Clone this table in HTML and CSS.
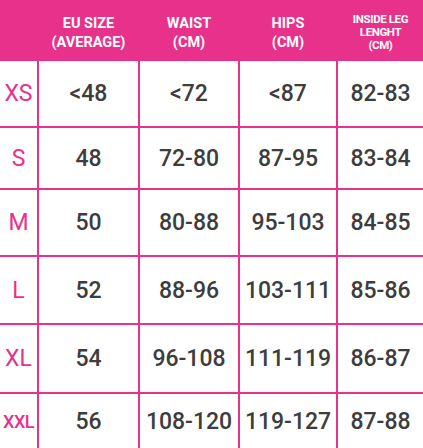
FILE: index.html
```html
<!DOCTYPE html>
<html lang="en">
<head>
<meta charset="utf-8">
<title>Size chart</title>
<link rel="stylesheet" href="styles.css">
</head>
<body>
<div class="chart">
  <div class="head">
    <div class="hcell"></div>
    <div class="hcell">EU SIZE<br>(AVERAGE)</div>
    <div class="hcell">WAIST<br>(CM)</div>
    <div class="hcell">HIPS<br>(CM)</div>
    <div class="hcell small">INSIDE LEG<br>LENGHT<br>(CM)</div>
  </div>
  <div class="grid">
    <div class="size">XS</div><div class="val">&lt;48</div><div class="val">&lt;72</div><div class="val">&lt;87</div><div class="val">82-83</div>
    <div class="size">S</div><div class="val">48</div><div class="val">72-80</div><div class="val">87-95</div><div class="val">83-84</div>
    <div class="size">M</div><div class="val">50</div><div class="val">80-88</div><div class="val">95-103</div><div class="val">84-85</div>
    <div class="size">L</div><div class="val">52</div><div class="val">88-96</div><div class="val">103-111</div><div class="val">85-86</div>
    <div class="size">XL</div><div class="val">54</div><div class="val">96-108</div><div class="val">111-119</div><div class="val">86-87</div>
    <div class="size xxl">XXL</div><div class="val">56</div><div class="val">108-120</div><div class="val">119-127</div><div class="val">87-88</div>
  </div>
</div>
</body>
</html>
```
FILE: styles.css
```css
html, body {
  margin: 0;
  padding: 0;
  background: #fff;
}
body {
  font-family: Roboto, "Liberation Sans", sans-serif;
  width: 423px;
  height: 448px;
  overflow: hidden;
}
.chart {
  width: 423px;
}
.head {
  display: grid;
  grid-template-columns: 37px 99px 98px 96px 85px;
  column-gap: 2px;
  height: 61px;
  background: #e8318a;
}
.hcell {
  color: #fff;
  font-weight: 700;
  font-size: 14.5px;
  line-height: 19px;
  text-align: center;
  display: flex;
  align-items: center;
  justify-content: center;
  padding-top: 4px;
}
.hcell.small {
  font-size: 11.5px;
  line-height: 13px;
  letter-spacing: -0.4px;
  padding-top: 3px;
}
.grid {
  display: grid;
  grid-template-columns: 37px 99px 98px 96px 85px;
  grid-template-rows: 65px 60px 65px 66px 67px 54px;
  gap: 2px;
  background: #e8318a;
}
.grid > div {
  background: #fff;
  display: flex;
  align-items: center;
  justify-content: center;
}
.val {
  color: #3d3d3d;
  font-size: 23px;
  font-weight: 500;
}
.size {
  color: #ea2f8c;
  font-size: 23px;
  font-weight: 400;
}
.size.xxl {
  font-size: 18px;
  font-weight: 500;
  letter-spacing: -0.5px;
}
```
